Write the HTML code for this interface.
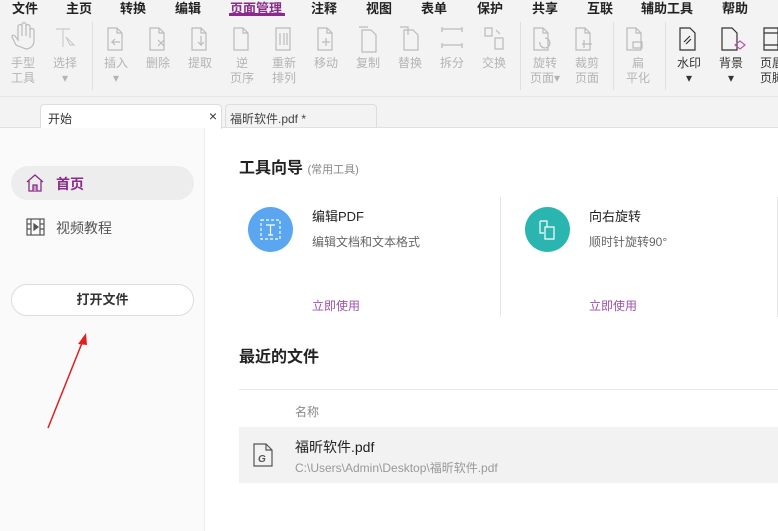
<!DOCTYPE html>
<html><head><meta charset="utf-8"><style>
*{margin:0;padding:0;box-sizing:border-box}
body{width:778px;height:531px;overflow:hidden;background:#fff;font-family:"Liberation Sans","Noto Sans CJK SC",sans-serif;position:relative}
.abs{position:absolute}
#top{left:0;top:0;width:778px;height:100px;background:#f3f3f3}
.m{position:absolute;top:-2px;font-size:13px;font-weight:bold;color:#222;transform:translateX(-50%);white-space:nowrap}
.t{position:absolute;top:56px;font-size:12px;line-height:15px;color:#b4b4b4;text-align:center;transform:translateX(-50%);white-space:nowrap}
.t.d{color:#333}
.sep{position:absolute;top:22px;width:1px;height:68px;background:#e0e0e0}
</style></head><body>
<div id="top" class="abs">
<div class="m" style="left:25px">文件</div><div class="m" style="left:79px">主页</div><div class="m" style="left:133px">转换</div><div class="m" style="left:188px">编辑</div>
<div class="m" style="left:256px;color:#8a2a8a">页面管理</div><div class="abs" style="left:229px;top:13px;width:56px;height:3px;background:#8a2a8a"></div>
<div class="m" style="left:324px">注释</div><div class="m" style="left:379px">视图</div><div class="m" style="left:434px">表单</div><div class="m" style="left:490px">保护</div><div class="m" style="left:545px">共享</div><div class="m" style="left:600px">互联</div><div class="m" style="left:667px">辅助工具</div><div class="m" style="left:735px">帮助</div>

<svg class="abs" style="left:0;top:0" width="778" height="60" fill="none" stroke="#bbb" stroke-width="1.2">
<path d="M16 45 l-4 -8 q0-3 3-1 l3 4 v-14 q2-3 4 0 v10 v-12 q2-3 4 0 v12 v-10 q2-3 4 0 v12 v-8 q2-3 4 0 v10 q0 8 -8 9 z"/>
<path d="M56 29 h14 M63 29 v18 M66 37 l8 8 h-4 z" stroke="#ccc"/>
<path d="M108 28 h9 l5 5 v17 h-14 z M117 28 v5 h5"/>
<path d="M120 42 h-8 l3 -3 m-3 3 l3 3"/>
<path d="M150 28 h9 l5 5 v17 h-14 z M159 28 v5 h5 M158 40 l6 6 m0 -6 l-6 6"/>
<path d="M192 28 h9 l5 5 v17 h-14 z M201 28 v5 h5 M201 36 v9 l-3-3 m3 3 l3-3" />
<path d="M234 28 h9 l5 5 v17 h-14 z M243 28 v5 h5"/>
<path d="M276 28 h14 v22 h-14 z M280 33 v12 M284 33 v12 M287 33 v12"/>
<path d="M318 28 h9 l5 5 v17 h-14 z M327 28 v5 h5 M326 38 v8 m-4 -4 h8"/>
<path d="M362 30 h9 l5 5 v17 h-14 z M359 27 h9"/>
<path d="M404 30 h9 l5 5 v15 h-14 z M400 27 h8 v8"/>
<path d="M442 29 h20 M442 27 v5 M462 27 v5 M442 45 h20 M442 43 v5 M462 43 v5"/>
<path d="M485 28 h7 v8 h-7 z M495 38 h8 v11 h-8 z M496 30 l4 4"/>
<path d="M534 28 h9 l5 5 v17 h-14 z M543 28 v5 h5 M540 42 a5 5 0 1 0 5 -4"/>
<path d="M576 28 h9 l5 5 v17 h-14 z M585 28 v5 h5 M582 44 h10 M584 40 v8"/>
<path d="M627 28 h9 l5 5 v17 h-14 z M636 28 v5 h5 M633 42 h9 v6 h-9 z"/>
<g stroke="#333"><path d="M680 28 h10 l5 5 v17 h-15 z M684 42 l6 -6 M686 44 l5 -5"/>
<path d="M722 28 h10 l5 5 v17 h-15 z"/><path d="M740 41 l5 4 -5 4 -5 -4 z" stroke="#b05ab0"/>
<path d="M764 28 h14 v22 h-14 z M764 33 h14 M764 45 h14"/></g>
</svg>
<div class="sep" style="left:92px"></div><div class="sep" style="left:520px"></div><div class="sep" style="left:613px"></div><div class="sep" style="left:665px"></div>
<div class="t" style="left:23px">手型<br>工具</div><div class="t" style="left:65px">选择<br>▾</div>
<div class="t" style="left:116px">插入<br>▾</div><div class="t" style="left:158px">删除</div><div class="t" style="left:200px">提取</div>
<div class="t" style="left:242px">逆<br>页序</div><div class="t" style="left:284px">重新<br>排列</div><div class="t" style="left:326px">移动</div><div class="t" style="left:368px">复制</div>
<div class="t" style="left:410px">替换</div><div class="t" style="left:452px">拆分</div><div class="t" style="left:494px">交换</div>
<div class="t" style="left:545px">旋转<br>页面▾</div><div class="t" style="left:587px">裁剪<br>页面</div><div class="t" style="left:638px">扁<br>平化</div>
<div class="t d" style="left:689px">水印<br>▾</div><div class="t d" style="left:731px">背景<br>▾</div><div class="t d" style="left:772px">页眉<br>页脚</div>
</div>
<div class="abs" style="left:0;top:96px;width:778px;height:1px;background:#e6e6e6"></div>
<div class="abs" style="left:0;top:97px;width:778px;height:31px;background:#f3f3f3;border-bottom:1px solid #e0e0e0"></div>
<div class="abs" style="left:40px;top:104px;width:182px;height:25px;background:#fff;border:1px solid #ddd;border-bottom:none;border-radius:4px 4px 0 0;font-size:12px;padding:5px 0 0 7px;color:#333">开始<span style="position:absolute;right:4px;top:3px;font-size:14px">×</span></div>
<div class="abs" style="left:225px;top:104px;width:152px;height:24px;border:1px solid #ddd;border-bottom:none;border-radius:4px 4px 0 0;font-size:12px;padding:5px 0 0 4px;color:#444">福昕软件.pdf *</div>

<div class="abs" style="left:0;top:128px;width:205px;height:403px;background:#fafafa;border-right:1px solid #eee"></div>
<div class="abs" style="left:11px;top:166px;width:183px;height:34px;border-radius:17px;background:#ededed"></div>
<svg class="abs" style="left:25px;top:173px" width="20" height="20" fill="none" stroke="#8a2a8a" stroke-width="1.3"><path d="M2 9 L10 2 L18 9 M4 8 v10 h12 v-10"/><path d="M8 18 v-6 h4 v6" fill="#c9a0c9"/></svg>
<div class="abs" style="left:56px;top:174px;font-size:14px;font-weight:bold;color:#8a2a8a">首页</div>
<svg class="abs" style="left:26px;top:218px" width="20" height="18" fill="none" stroke="#555" stroke-width="1.2"><rect x="1" y="1" width="17" height="16"/><path d="M5 1v16M14 1v16M1 6h4M1 11h4M14 6h4M14 11h4"/><path d="M8 6 l4 3 -4 3z" fill="#555"/></svg>
<div class="abs" style="left:56px;top:218px;font-size:14px;color:#555">视频教程</div>
<div class="abs" style="left:11px;top:284px;width:183px;height:32px;border-radius:16px;background:#fff;border:1px solid #ddd;text-align:center;font-size:13px;font-weight:bold;line-height:30px;color:#333">打开文件</div>
<svg class="abs" style="left:40px;top:330px" width="50" height="100"><path d="M8 98 L44 8" stroke="#e02020" stroke-width="1.5"/><path d="M46 3 L38 14 L47 15 z" fill="#e02020"/></svg>

<div class="abs" style="left:239px;top:154px;font-size:16px;font-weight:bold;color:#222">工具向导 <span style="font-size:11px;font-weight:normal;color:#888">(常用工具)</span></div>
<div class="abs" style="left:248px;top:207px;width:45px;height:45px;border-radius:50%;background:#5aa6f0"></div>
<svg class="abs" style="left:258px;top:217px" width="25" height="25" fill="none" stroke="#fff" stroke-width="1.2"><rect x="3" y="3" width="19" height="19" stroke-dasharray="3 2"/><path d="M8 8h9M12.5 8v10M10 18h5"/></svg>
<div class="abs" style="left:312px;top:206px;font-size:13px;color:#222">编辑PDF</div>
<div class="abs" style="left:312px;top:233px;font-size:12px;color:#666">编辑文档和文本格式</div>
<div class="abs" style="left:312px;top:297px;font-size:12px;color:#a050b0">立即使用</div>
<div class="abs" style="left:500px;top:197px;width:1px;height:120px;background:#e6e6e6"></div>
<div class="abs" style="left:525px;top:207px;width:45px;height:45px;border-radius:50%;background:#2bb5b0"></div>
<svg class="abs" style="left:536px;top:218px" width="24" height="24" fill="none" stroke="#fff" stroke-width="1.2"><path d="M4 3h7v6M4 3v12h4M9 9h9v12h-9z"/></svg>
<div class="abs" style="left:589px;top:206px;font-size:13px;color:#222">向右旋转</div>
<div class="abs" style="left:589px;top:233px;font-size:12px;color:#666">顺时针旋转90°</div>
<div class="abs" style="left:589px;top:297px;font-size:12px;color:#a050b0">立即使用</div>
<div class="abs" style="left:777px;top:197px;width:1px;height:120px;background:#e6e6e6"></div>

<div class="abs" style="left:239px;top:343px;font-size:16px;font-weight:bold;color:#222">最近的文件</div>
<div class="abs" style="left:239px;top:389px;width:539px;height:1px;background:#e8e8e8"></div>
<div class="abs" style="left:295px;top:403px;font-size:12px;color:#888">名称</div>
<div class="abs" style="left:239px;top:427px;width:539px;height:56px;background:#f2f2f2"></div>
<svg class="abs" style="left:252px;top:442px" width="22" height="26" fill="none" stroke="#555" stroke-width="1.2"><path d="M2 2h12l6 6v16H2z M14 2v6h6"/><text x="6" y="20" font-size="10" font-weight="bold" font-style="italic" fill="#555" stroke="none" font-family="Liberation Sans">G</text></svg>
<div class="abs" style="left:295px;top:437px;font-size:14px;color:#222">福昕软件.pdf</div>
<div class="abs" style="left:295px;top:459px;font-size:12px;color:#999">C:\Users\Admin\Desktop\福昕软件.pdf</div>
</body></html>
